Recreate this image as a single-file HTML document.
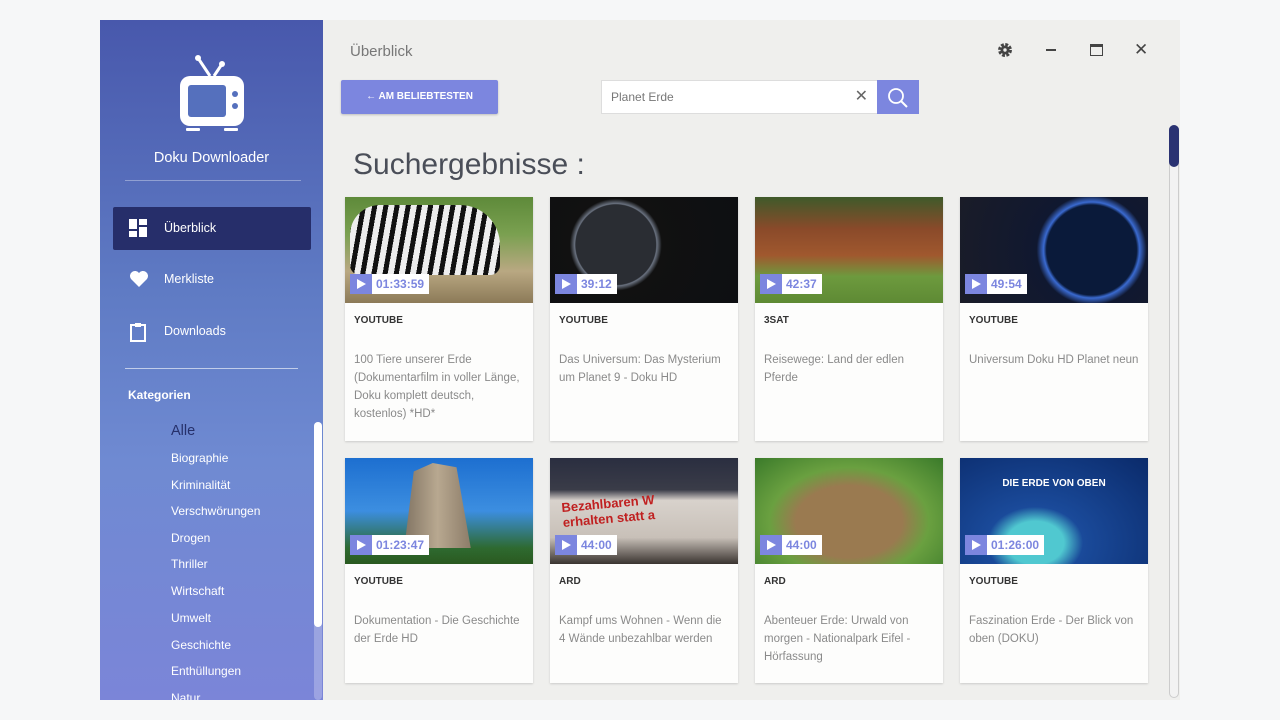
<!DOCTYPE html>
<html><head><meta charset="utf-8"><style>
*{margin:0;padding:0;box-sizing:border-box}
body{width:1280px;height:720px;background:#f6f7f8;font-family:"Liberation Sans",sans-serif;position:relative;overflow:hidden}
.win{position:absolute;left:100px;top:20px;width:1080px;height:680px;background:#efefed}
.side{position:absolute;left:100px;top:20px;width:223px;height:680px;background:linear-gradient(180deg,#4858ac 0%,#5f7bc4 40%,#6f8ad2 65%,#7b85d8 100%);overflow:hidden}
.side .t{position:absolute;left:0;width:223px;top:130px;text-align:center;color:#fff;font-size:14.5px}
.hr{position:absolute;height:1px;background:rgba(255,255,255,.35)}
.nav{position:absolute;left:13px;width:198px;height:43px;color:#fff;font-size:12.5px;line-height:43px;padding-left:51px}
.nav svg{position:absolute;left:16px;top:12px}
.cat{position:absolute;left:71px;color:#fff;font-size:12px}
.card{position:absolute;width:188px;background:#fdfdfc;box-shadow:0 1px 2px rgba(0,0,0,.15)}
.card .img{height:106px;position:relative;overflow:hidden}
.badge{position:absolute;left:5px;bottom:9px;height:20px;display:flex;background:#fff}
.badge .p{width:22px;height:20px;background:#7c86df;position:relative}
.badge .p:after{content:"";position:absolute;left:7px;top:5px;border-left:9px solid #fff;border-top:5px solid transparent;border-bottom:5px solid transparent}
.badge .tm{color:#7c86df;font-weight:bold;font-size:12px;line-height:20px;padding:0 5px 0 4px}
.src{position:absolute;left:9px;top:118px;font-size:10px;font-weight:bold;color:#333}
.ttl{position:absolute;left:9px;top:154px;right:8px;font-size:11.5px;line-height:18px;color:#8a8a8a}
</style></head><body>
<div class="win"></div>
<div class="side">
<svg style="position:absolute;left:78px;top:34px" width="68" height="80" viewBox="0 0 68 80"><line x1="20" y1="4" x2="32" y2="22" stroke="#fff" stroke-width="3"/><line x1="44" y1="10" x2="36" y2="22" stroke="#fff" stroke-width="3"/><circle cx="20" cy="4" r="3" fill="#fff"/><circle cx="44" cy="10" r="3" fill="#fff"/><rect x="2" y="22" width="64" height="50" rx="10" fill="#fff"/><rect x="10" y="31" width="38" height="32" rx="3" fill="#5570bd"/><circle cx="57" cy="40" r="3" fill="#5570bd"/><circle cx="57" cy="52" r="3" fill="#5570bd"/><rect x="8" y="74" width="14" height="3" rx="1" fill="#fff"/><rect x="46" y="74" width="14" height="3" rx="1" fill="#fff"/></svg>
<div class="t">Doku Downloader</div>
<div class="hr" style="left:25px;width:176px;top:160px"></div>
<div class="nav" style="top:187px;background:#262e6a;border-radius:2px">Überblick<svg width="18" height="18" viewBox="0 0 18 18" fill="#fff"><rect x="0" y="0" width="8" height="10"/><rect x="10" y="0" width="8" height="6"/><rect x="0" y="12" width="8" height="6"/><rect x="10" y="8" width="8" height="10"/></svg></div>
<div class="nav" style="top:238px">Merkliste<svg width="20" height="18" viewBox="0 0 20 18"><path d="M10 17 L2 9 A5 5 0 0 1 10 3 A5 5 0 0 1 18 9 Z" fill="#fff"/></svg></div>
<div class="nav" style="top:290px">Downloads<svg width="18" height="20" viewBox="0 0 18 20"><rect x="2" y="3" width="14" height="16" fill="none" stroke="#fff" stroke-width="2"/><rect x="6" y="1" width="6" height="4" fill="#fff"/></svg></div>
<div class="hr" style="left:25px;width:173px;top:348px;background:rgba(255,255,255,.6)"></div>
<div style="position:absolute;left:28px;top:368px;color:#fff;font-size:12px;font-weight:bold">Kategorien</div>
<div class="cat" style="top:403px;font-size:14.5px;color:#26306a">Alle</div>
<div class="cat" style="top:431px">Biographie</div>
<div class="cat" style="top:458px">Kriminalität</div>
<div class="cat" style="top:484px">Verschwörungen</div>
<div class="cat" style="top:511px">Drogen</div>
<div class="cat" style="top:537px">Thriller</div>
<div class="cat" style="top:564px">Wirtschaft</div>
<div class="cat" style="top:591px">Umwelt</div>
<div class="cat" style="top:618px">Geschichte</div>
<div class="cat" style="top:644px">Enthüllungen</div>
<div class="cat" style="top:671px">Natur</div>
<div style="position:absolute;left:214px;top:402px;width:8px;height:278px;border-radius:4px;background:rgba(255,255,255,.25)"></div>
<div style="position:absolute;left:214px;top:402px;width:8px;height:205px;border-radius:4px;background:#fff"></div>
</div>
<div style="position:absolute;left:350px;top:43px;font-size:15px;color:#777">Überblick</div>
<svg style="position:absolute;left:997px;top:42px" width="16" height="16" viewBox="0 0 16 16"><circle cx="8" cy="8" r="5.2" fill="none" stroke="#444" stroke-width="3.5" stroke-dasharray="2.7 1.4"/><circle cx="8" cy="8" r="4.5" fill="#444"/><circle cx="8" cy="8" r="1.7" fill="#efefed"/></svg>
<div style="position:absolute;left:1046px;top:49px;width:10px;height:2px;background:#444"></div>
<div style="position:absolute;left:1090px;top:44px;width:13px;height:12px;border:1.5px solid #444;border-top-width:3px"></div>
<div style="position:absolute;left:1134px;top:40px;font-size:17px;color:#444">✕</div>
<div style="position:absolute;left:341px;top:80px;width:157px;height:34px;background:#7c86df;border-radius:2px;box-shadow:0 1px 2px rgba(0,0,0,.2);color:#fff;font-size:10px;font-weight:bold;line-height:34px;text-align:center">← AM BELIEBTESTEN</div>
<div style="position:absolute;left:601px;top:80px;width:277px;height:34px;background:#fff;border:1px solid #ddd;font-size:12px;color:#777;line-height:32px;padding-left:9px">Planet Erde<span style="position:absolute;right:9px;top:0;font-size:16px;color:#666">✕</span></div>
<div style="position:absolute;left:877px;top:80px;width:42px;height:34px;background:#7c86df"><svg style="position:absolute;left:10px;top:7px" width="22" height="22" viewBox="0 0 22 22"><circle cx="9" cy="9" r="7" fill="none" stroke="#fff" stroke-width="1.8"/><line x1="14" y1="14" x2="20" y2="20" stroke="#fff" stroke-width="2"/></svg></div>
<div style="position:absolute;left:353px;top:148px;font-size:30px;color:#4a4e58">Suchergebnisse :</div>
<div style="position:absolute;left:1169px;top:125px;width:10px;height:573px;border:1px solid #ccc;border-radius:5px;background:#f2f2f2"></div>
<div style="position:absolute;left:1169px;top:125px;width:10px;height:42px;border-radius:5px;background:#2a3272"></div>

<div class="card" style="left:345px;top:197px;height:244px"><div class="img" style="background:linear-gradient(180deg,#5e8a3a 0%,#7aa050 35%,#b9a882 70%,#8c7a58 100%)"><div style="position:absolute;left:5px;top:8px;width:150px;height:70px;background:repeating-linear-gradient(100deg,#111 0 5px,#eee 5px 11px);border-radius:30px 40px 10px 10px"></div><div class="badge"><div class="p"></div><div class="tm">01:33:59</div></div></div><div class="src">YOUTUBE</div><div class="ttl">100 Tiere unserer Erde (Dokumentarfilm in voller Länge, Doku komplett deutsch, kostenlos) *HD*</div></div>
<div class="card" style="left:550px;top:197px;height:244px"><div class="img" style="background:radial-gradient(circle at 35% 45%,#2a2d33 0 40px,#6a7280 41px,#111 46px,#0d0f12 100%)"><div class="badge"><div class="p"></div><div class="tm">39:12</div></div></div><div class="src">YOUTUBE</div><div class="ttl">Das Universum: Das Mysterium um Planet 9 - Doku HD</div></div>
<div class="card" style="left:755px;top:197px;height:244px"><div class="img" style="background:linear-gradient(180deg,#3f5a2a 0%,#8a4a2a 30%,#a0582e 55%,#6d9a3e 75%,#5e8a34 100%)"><div class="badge"><div class="p"></div><div class="tm">42:37</div></div></div><div class="src">3SAT</div><div class="ttl">Reisewege: Land der edlen Pferde</div></div>
<div class="card" style="left:960px;top:197px;height:244px"><div class="img" style="background:radial-gradient(circle at 70% 50%,#0a1a3a 0 45px,#3a6ad0 48px,#101830 55px,#1a1c28 100%)"><div class="badge"><div class="p"></div><div class="tm">49:54</div></div></div><div class="src">YOUTUBE</div><div class="ttl">Universum Doku HD Planet neun</div></div>

<div class="card" style="left:345px;top:458px;height:225px"><div class="img" style="background:linear-gradient(180deg,#1d6fd0 0%,#3c8ee0 50%,#2e6a30 85%,#2a5a20 100%)"><div style="position:absolute;left:45px;top:5px;width:95px;height:85px;background:linear-gradient(90deg,#6a5e50,#b8a890,#7a6a58);clip-path:polygon(15% 100%,25% 10%,45% 0,70% 5%,85% 100%)"></div><div class="badge"><div class="p"></div><div class="tm">01:23:47</div></div></div><div class="src">YOUTUBE</div><div class="ttl">Dokumentation - Die Geschichte der Erde HD</div></div>
<div class="card" style="left:550px;top:458px;height:225px"><div class="img" style="background:linear-gradient(180deg,#2a2e40 0%,#3a3c48 30%,#d8d2cc 40%,#c8c0b8 75%,#3a3430 100%)"><div style="position:absolute;left:12px;top:38px;font-size:13px;color:#c02020;font-weight:bold;transform:rotate(-5deg)">Bezahlbaren W<br>erhalten statt a</div><div class="badge"><div class="p"></div><div class="tm">44:00</div></div></div><div class="src">ARD</div><div class="ttl">Kampf ums Wohnen - Wenn die 4 Wände unbezahlbar werden</div></div>
<div class="card" style="left:755px;top:458px;height:225px"><div class="img" style="background:radial-gradient(ellipse at 50% 60%,#9a7a50 0 40%,#6aa040 60%,#3a7a2a 100%)"><div class="badge"><div class="p"></div><div class="tm">44:00</div></div></div><div class="src">ARD</div><div class="ttl">Abenteuer Erde: Urwald von morgen - Nationalpark Eifel - Hörfassung</div></div>
<div class="card" style="left:960px;top:458px;height:225px"><div class="img" style="background:radial-gradient(ellipse at 40% 80%,#50c8d0 0 18%,#1a4a9a 30%,#0a2a6a 100%)"><div style="position:absolute;left:0;right:0;top:20px;text-align:center;color:#fff;font-weight:bold;font-size:10px">DIE ERDE VON OBEN</div><div class="badge"><div class="p"></div><div class="tm">01:26:00</div></div></div><div class="src">YOUTUBE</div><div class="ttl">Faszination Erde - Der Blick von oben (DOKU)</div></div>
</body></html>
